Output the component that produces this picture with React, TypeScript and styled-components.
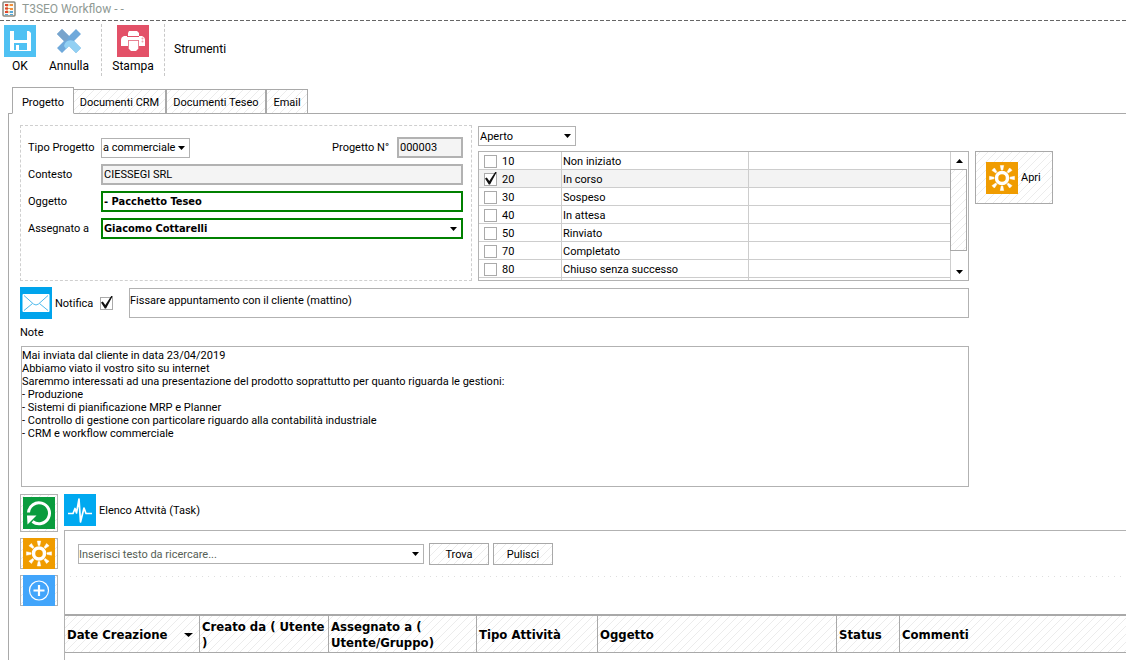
import React from "react";
import styled, { createGlobalStyle, css } from "styled-components";

const ui = `Roboto, "Liberation Sans", sans-serif`;
const uiBold = `"DejaVu Sans Condensed", "DejaVu Sans", sans-serif`;
const line = "#b2b2b2";
const frame = "#a9a9a9";

const GlobalStyle = createGlobalStyle`
  *, *::before, *::after { box-sizing: border-box; }
  body { margin: 0; background: #fff; color: #000; font: 11px/13px ${ui}; }
  button, input, select, textarea { font: inherit; color: inherit; margin: 0; border-radius: 0; outline: none; }
  svg { display: block; flex: none; }
`;

const hatch = css`
  background: #fff linear-gradient(135deg,
    #e6e6e6 0 6%, #fff 6% 19%, #ececec 19% 25%, #fff 25% 50%,
    #e6e6e6 50% 56%, #fff 56% 69%, #ececec 69% 75%, #fff 75%) 0 0 / 8px 8px;
`;

const Page = styled.div`
  display: flex;
  flex-direction: column;
  min-height: 100vh;
`;

const TitleBar = styled.header`
  display: flex;
  align-items: center;
  gap: 6px;
  height: 21px;
  padding: 0 2px 3px;
  background: repeating-linear-gradient(90deg, #666 0 4px, #fff 4px 6px) 0 100% / 100% 1px no-repeat;
  color: #8f9a94;
  font-size: 12px;
`;

const Toolbar = styled.nav`
  display: flex;
  align-items: flex-start;
  height: 66px;
  padding-top: 3px;
  font-size: 12px;
`;

const ToolGroup = styled.div`
  display: flex;
  padding-right: 3px;
`;

const Tool = styled.button<{ $width: number }>`
  display: flex;
  flex-direction: column;
  align-items: center;
  gap: 1px;
  width: ${(p) => p.$width}px;
  padding: 1px 0 0;
  border: 0;
  background: none;
  line-height: 16px;
`;

const ToolDivider = styled.div`
  width: 1px;
  height: 52px;
  border-left: 1px dashed #c8c8c8;
`;

const ToolMenu = styled.button`
  height: 51px;
  padding: 0 9px;
  border: 0;
  background: none;
`;

const TabStrip = styled.div`
  display: flex;
  align-items: flex-end;
  height: 27px;
  margin-left: 8px;
  padding-left: 4px;
  border-bottom: 1px solid ${frame};
`;

const Tab = styled.button<{ $width: number; $active?: boolean; $joined?: boolean }>`
  flex: none;
  width: ${(p) => p.$width}px;
  height: ${(p) => (p.$active ? 27 : 25)}px;
  margin-bottom: -1px;
  padding: ${(p) => (p.$active ? 3 : 1)}px 0 0;
  border: 1px solid ${frame};
  ${(p) => p.$joined && "border-left: 0;"}
  ${hatch}
  ${(p) => p.$active && "background: #fff; border-bottom-color: #fff;"}
`;

const Panel = styled.main`
  flex: 1;
  display: flex;
  flex-direction: column;
  margin-left: 8px;
  padding: 11px 0 0 11px;
  border-left: 1px solid ${frame};
`;

const Columns = styled.div`
  display: grid;
  grid-template-columns: minmax(0, 452fr) minmax(0, 491fr) 151px;
  column-gap: 6px;
`;

const Form = styled.form`
  display: flex;
  flex-direction: column;
  gap: 6px;
  height: 156px;
  padding: 11px 8px 11px 7px;
  border: 1px dashed #cfcfcf;
`;

const FormRow = styled.div`
  display: flex;
  align-items: center;
  height: 21px;
`;

const FieldLabel = styled.label`
  flex: none;
  width: 73px;
`;

const NumberLabel = styled.label`
  margin-left: auto;
  padding-right: 8px;
`;

const TextField = styled.input<{ $required?: boolean; $narrow?: boolean }>`
  flex: ${(p) => (p.$narrow ? "0 0 66px" : "1")};
  min-width: 0;
  height: 21px;
  padding: 0 1px;
  border: 2px solid ${line};
  background: #f4f4f4;
  ${(p) =>
    p.$required &&
    css`
      border-color: #008000;
      background: #fff;
      font-family: ${uiBold};
      font-weight: 700;
    `}
`;

const SelectFrame = styled.span<{ $width?: number; $required?: boolean }>`
  display: grid;
  grid-template-columns: minmax(0, 1fr) 14px;
  align-items: center;
  flex: ${(p) => (p.$width ? "none" : "1")};
  width: ${(p) => (p.$width ? `${p.$width}px` : "auto")};
  height: ${(p) => (p.$required ? 21 : 20)}px;
  border: ${(p) => (p.$required ? "2px solid #008000" : `1px solid ${line}`)};
  background: #fff;

  & > select {
    grid-area: 1 / 1 / 2 / 3;
    height: 100%;
    padding: 0 12px 0 1px;
    appearance: none;
    border: 0;
    background: none;
    ${(p) => p.$required && `font-family: ${uiBold}; font-weight: 700;`}
  }

  & > svg {
    grid-area: 1 / 2 / 2 / 3;
    justify-self: end;
    margin-right: 4px;
    pointer-events: none;
  }
`;

const StatusColumn = styled.section`
  display: flex;
  flex-direction: column;
  gap: 5px;
  padding-top: 1px;
`;

const StatusBox = styled.div`
  display: flex;
  height: 130px;
  border: 1px solid ${line};
`;

const StatusView = styled.div`
  flex: 1;
  overflow: hidden;
`;

const StatusTable = styled.table`
  width: 100%;
  table-layout: fixed;
  border-collapse: separate;
  border-spacing: 0;
`;

const StatusRow = styled.tr<{ $selected?: boolean }>`
  background: ${(p) => (p.$selected ? "#f3f3f3" : "#fff")};
`;

const StatusCell = styled.td<{ $width?: number }>`
  width: ${(p) => (p.$width ? `${p.$width}px` : "auto")};
  height: 18px;
  padding: 1px 0 0 1px;
  border: solid #cdcdcd;
  border-width: 0 1px 1px 0;
`;

const CheckLabel = styled.label`
  display: flex;
  align-items: center;
  gap: 5px;
  padding-left: 4px;
`;

const CheckBox = styled.input.attrs({ type: "checkbox" })`
  position: relative;
  flex: none;
  width: 13px;
  height: 13px;
  appearance: none;
  border: 1px solid #aaa;
  background: #fff;

  &:checked::after {
    content: "";
    position: absolute;
    inset: -2px -1px 0 0;
    background: #111;
    clip-path: polygon(0 54%, 15% 46%, 36% 74%, 88% 0, 100% 0, 42% 100%, 32% 100%);
  }
`;

const ScrollRail = styled.div`
  display: flex;
  flex-direction: column;
  flex: none;
  width: 17px;
`;

const ScrollStep = styled.button`
  display: grid;
  place-items: center;
  flex: none;
  height: 17px;
  padding: 0;
  border: 0;
  background: none;
`;

const ScrollThumb = styled.div`
  height: 82px;
  margin: 0 1px auto -1px;
  border: 1px solid ${frame};
  ${hatch}
`;

const OpenButton = styled.button`
  display: flex;
  align-items: center;
  gap: 3px;
  width: 78px;
  height: 53px;
  margin-top: 26px;
  padding: 0 10px;
  border: 1px solid ${frame};
  ${hatch}
`;

const Wide = styled.div`
  margin-right: 157px;
`;

const NotifyRow = styled.div`
  display: flex;
  align-items: center;
  height: 32px;
  margin-top: 6px;
`;

const NotifyLabel = styled.label`
  display: flex;
  align-items: center;
  justify-content: space-between;
  flex: none;
  width: 58px;
  margin: 0 16px 0 3px;
`;

const Subject = styled.textarea`
  flex: 1;
  height: 30px;
  padding: 5px 0;
  border: 1px solid ${line};
  resize: none;
  overflow: hidden;
`;

const NoteLabel = styled.label`
  display: block;
  line-height: 27px;
`;

const NoteBox = styled.div`
  display: flex;
  padding-left: 1px;
`;

const Note = styled.textarea`
  flex: 1;
  height: 141px;
  padding: 2px 0;
  border: 1px solid ${line};
  resize: none;
  overflow: hidden;
`;

const TaskArea = styled.section`
  flex: 1;
  display: grid;
  grid-template-columns: 38px minmax(0, 1fr);
  column-gap: 6px;
  margin-top: 7px;
`;

const SideButtons = styled.div`
  display: flex;
  flex-direction: column;
  gap: 6px;
`;

const SideButton = styled.button<{ $tall?: boolean }>`
  display: grid;
  place-items: center;
  height: ${(p) => (p.$tall ? 38 : 31)}px;
  padding: 0;
  border: 1px solid ${line};
  ${hatch}

  & > svg {
    height: ${(p) => (p.$tall ? 32 : 31)}px;
    margin: -1px 0;
  }
`;

const TaskColumn = styled.div`
  display: flex;
  flex-direction: column;
`;

const TaskHeading = styled.h2`
  display: flex;
  align-items: center;
  gap: 3px;
  margin: 0 0 4px;
  font: inherit;
`;

const TaskPanel = styled.div`
  flex: 1;
  border: solid ${line};
  border-width: 1px 0 0 1px;
`;

const SearchBar = styled.form`
  display: flex;
  align-items: center;
  gap: 5px;
  height: 46px;
  padding: 0 13px;
  background: repeating-linear-gradient(90deg, #fff 0 5px, #dedede 5px 6px) 0 100% / 100% 1px no-repeat;
`;

const SearchFrame = styled.span`
  display: flex;
  align-items: center;
  flex: 0 1 346px;
  height: 20px;
  padding-right: 4px;
  border: 1px solid ${line};

  & > input {
    flex: 1;
    min-width: 0;
    padding: 0;
    border: 0;
    background: none;
  }

  & > input::placeholder {
    color: #556055;
    opacity: 1;
  }
`;

const PushButtons = styled.div`
  display: flex;
  gap: 4px;
`;

const PushButton = styled.button`
  width: 60px;
  height: 22px;
  padding: 0;
  border: 1px solid ${frame};
  ${hatch}
`;

const TaskTable = styled.table`
  width: 100%;
  margin-top: 37px;
  table-layout: fixed;
  border-collapse: separate;
  border-spacing: 0;
  border-top: 2px solid ${frame};
  font: 700 13px/16px ${uiBold};
`;

const TaskHead = styled.th<{ $width?: number }>`
  width: ${(p) => (p.$width ? `${p.$width}px` : "auto")};
  height: 37px;
  padding: 2px 2px 0;
  border: solid ${frame};
  border-width: 0 1px 1px 0;
  text-align: left;
  ${hatch}

  &:last-child { border-right: 0; }
`;

const SortHead = styled.span`
  display: flex;
  align-items: center;
  justify-content: space-between;
  padding-right: 4px;
`;

const Caret = ({ size = 7, up = false }: { size?: number; up?: boolean }) => (
  <svg width={size} height="4" viewBox="0 0 8 4" preserveAspectRatio="none" aria-hidden="true">
    <path d={up ? "M0 4 4 0l4 4z" : "M0 0h8L4 4z"} fill="#000" />
  </svg>
);

const AppIcon = () => (
  <svg width="14" height="16" viewBox="0 0 14 16" aria-hidden="true">
    <rect x="1" y="1" width="12" height="14" rx="1" fill="#fbf9f5" stroke="#8a8a80" strokeWidth="1.5" />
    <path d="M5 4h3M5 7.500h3M5 11h3M5 4v7" stroke="#d9a45a" fill="none" />
    <path d="M3 3h3v2H3zM3 6.500h3v2H3z" fill="#e0452c" />
    <path d="M8 3h3v2H8zM8 7h3v2H8z" fill="#f0913c" />
    <path d="M3 10h3v2H3z" fill="#e0452c" />
    <path d="M8 10h3v2H8zM3 13h3v1H3zM8 13h3v1H8z" fill="#57a9d8" />
  </svg>
);

const SaveIcon = () => (
  <svg width="32" height="32" viewBox="0 0 32 32" aria-hidden="true">
    <path d="M0 0h32v32H0z" fill="#4fc1f3" />
    <path d="M6 6h4v9h13V6h2l2 2v18h-4v-8H10v8H6z" fill="#fff" />
    <path d="M12 20h3v5h-3z" fill="#fff" />
    <path d="M10 25h13v1H10z" fill="#fff" />
  </svg>
);

const CancelIcon = () => (
  <svg width="32" height="32" viewBox="0 0 32 32" aria-hidden="true">
    <path d="m4 9 5-5 7 7 7-7 5 5-7 7 7 7-5 5-7-7-7 7-5-5 7-7z" fill="#6fa9db" />
    <path d="m4 9 5-5 7 7-3 5-2 0z" fill="#78a4cc" />
    <path d="M11 21c1-5 5-7 10-5l7 7-5 5-7-7-3 3z" fill="#92d0f3" />
  </svg>
);

const PrintIcon = () => (
  <svg width="32" height="32" viewBox="0 0 32 32" aria-hidden="true">
    <path d="M0 0h32v32H0z" fill="#e35168" />
    <path d="M12 6h8l2 2v3H11V8z" fill="#fff" />
    <path d="M7 11h18q3 1 3 4v6h-6v-6H11v6H4v-6q0-3 3-4z" fill="#fff" />
    <path d="M10 11.500h12" stroke="#e35168" />
    <path d="M12 16h9v8l-2 2h-5l-2-2z" fill="#fff" />
    <path d="M11.500 24v-8.500h10V24" stroke="#e88494" fill="none" />
    <circle cx="25.500" cy="13.500" r="1" fill="#f0a0ad" />
    <circle cx="25.500" cy="16.500" r="1" fill="#f0a0ad" />
  </svg>
);

const SunIcon = () => (
  <svg width="32" height="32" viewBox="0 0 32 32" preserveAspectRatio="xMidYMid slice" aria-hidden="true">
    <path d="M0 0h32v32H0z" fill="#f09c00" />
    <circle cx="16" cy="16" r="5.500" fill="none" stroke="#fff" strokeWidth="3.500" />
    {[0, 45, 90, 135, 180, 225, 270, 315].map((angle) => (
      <path key={angle} d="M14.300 3.500h3.400L16.800 8h-1.600z" fill="#fff" stroke="#fff" strokeWidth="0.500" transform={`rotate(${angle} 16 16)`} />
    ))}
  </svg>
);

const MailIcon = () => (
  <svg width="32" height="32" viewBox="0 0 32 32" aria-hidden="true">
    <path d="M0 0h32v32H0z" fill="#00a4ec" />
    <rect x="2.500" y="7" width="27" height="18" rx="1" fill="#fff" />
    <path d="m4 8.500 9.500 8.500q2.500 2 5 0L28 8.500M4 23.500l8.500-7M28 23.500l-8.500-7" fill="none" stroke="#4db9ec" />
  </svg>
);

const RefreshIcon = () => (
  <svg width="32" height="32" viewBox="0 0 32 32" aria-hidden="true">
    <path d="M0 0h32v32H0z" fill="#0a9c3e" />
    <path d="M5.500 15.500a10.500 10.500 0 1 1 4 9" fill="none" stroke="#fff" strokeWidth="3" />
    <path d="M4 18.500h9.500L4.500 27.500z" fill="#fff" />
  </svg>
);

const AddIcon = () => (
  <svg width="32" height="32" viewBox="0 0 32 32" preserveAspectRatio="xMidYMid slice" aria-hidden="true">
    <path d="M0 0h32v32H0z" fill="#42a5fb" />
    <circle cx="16" cy="16" r="9.500" fill="none" stroke="#fff" strokeWidth="1.200" />
    <path d="M16 10.500v11M10.500 16h11" stroke="#fff" strokeWidth="2.200" />
  </svg>
);

const PulseIcon = () => (
  <svg width="32" height="32" viewBox="0 0 32 32" aria-hidden="true">
    <path d="M0 0h32v32H0z" fill="#00a9f0" />
    <path d="M4 19.500h5l2-5 1.500 4.500L15 5l1.500 23L20 14l2 5.500h6" fill="none" stroke="#fff" strokeWidth="1.700" strokeLinejoin="round" />
  </svg>
);

const statuses: [string, string][] = [
  ["10", "Non iniziato"],
  ["20", "In corso"],
  ["30", "Sospeso"],
  ["40", "In attesa"],
  ["50", "Rinviato"],
  ["70", "Completato"],
  ["80", "Chiuso senza successo"],
];

const taskColumns: [string, number?][] = [
  ["Creato da ( Utente )", 129],
  ["Assegnato a ( Utente/Gruppo)", 148],
  ["Tipo Attività", 121],
  ["Oggetto", 239],
  ["Status", 63],
  ["Commenti"],
];

const noteText = `Mai inviata dal cliente in data 23/04/2019
Abbiamo viato il vostro sito su internet
Saremmo interessati ad una presentazione del prodotto soprattutto per quanto riguarda le gestioni:
- Produzione
- Sistemi di pianificazione MRP e Planner
- Controllo di gestione con particolare riguardo alla contabilità industriale
- CRM e workflow commerciale`;

export default function App() {
  return (
    <Page>
      <GlobalStyle />
      <TitleBar>
        <AppIcon />
        T3SEO Workflow - -
      </TitleBar>
      <Toolbar>
        <ToolGroup>
          <Tool $width={40}>
            <SaveIcon />
            OK
          </Tool>
          <Tool $width={58}>
            <CancelIcon />
            Annulla
          </Tool>
        </ToolGroup>
        <ToolDivider />
        <Tool $width={62}>
          <PrintIcon />
          Stampa
        </Tool>
        <ToolDivider />
        <ToolMenu>Strumenti</ToolMenu>
      </Toolbar>

      <TabStrip role="tablist">
        <Tab role="tab" aria-selected="true" $width={62} $active>Progetto</Tab>
        <Tab role="tab" aria-selected="false" $width={92} $joined>Documenti CRM</Tab>
        <Tab role="tab" aria-selected="false" $width={100}>Documenti Teseo</Tab>
        <Tab role="tab" aria-selected="false" $width={42}>Email</Tab>
      </TabStrip>

      <Panel>
        <Columns>
          <Form>
            <FormRow>
              <FieldLabel htmlFor="tipo">Tipo Progetto</FieldLabel>
              <SelectFrame $width={89}>
                <select id="tipo"><option>a commerciale</option></select>
                <Caret />
              </SelectFrame>
              <NumberLabel htmlFor="numero">Progetto N°</NumberLabel>
              <TextField id="numero" $narrow readOnly defaultValue="000003" />
            </FormRow>
            <FormRow>
              <FieldLabel htmlFor="contesto">Contesto</FieldLabel>
              <TextField id="contesto" readOnly defaultValue="CIESSEGI SRL" />
            </FormRow>
            <FormRow>
              <FieldLabel htmlFor="oggetto">Oggetto</FieldLabel>
              <TextField id="oggetto" $required defaultValue="- Pacchetto Teseo" />
            </FormRow>
            <FormRow>
              <FieldLabel htmlFor="assegnato">Assegnato a</FieldLabel>
              <SelectFrame $required>
                <select id="assegnato"><option>Giacomo Cottarelli</option></select>
                <Caret />
              </SelectFrame>
            </FormRow>
          </Form>

          <StatusColumn>
            <SelectFrame $width={98}>
              <select aria-label="Stato"><option>Aperto</option></select>
              <Caret />
            </SelectFrame>
            <StatusBox>
              <StatusView>
                <StatusTable>
                  <tbody>
                    {statuses.map(([code, name]) => (
                      <StatusRow key={code} $selected={code === "20"}>
                        <StatusCell $width={83}>
                          <CheckLabel>
                            <CheckBox defaultChecked={code === "20"} />
                            {code}
                          </CheckLabel>
                        </StatusCell>
                        <StatusCell $width={187}>{name}</StatusCell>
                        <StatusCell />
                      </StatusRow>
                    ))}
                    <StatusRow>
                      <StatusCell />
                      <StatusCell />
                      <StatusCell />
                    </StatusRow>
                  </tbody>
                </StatusTable>
              </StatusView>
              <ScrollRail>
                <ScrollStep type="button" aria-label="Su"><Caret up /></ScrollStep>
                <ScrollThumb />
                <ScrollStep type="button" aria-label="Giù"><Caret /></ScrollStep>
              </ScrollRail>
            </StatusBox>
          </StatusColumn>

          <OpenButton>
            <SunIcon />
            Apri
          </OpenButton>
        </Columns>

        <Wide>
          <NotifyRow>
            <MailIcon />
            <NotifyLabel>
              Notifica
              <CheckBox defaultChecked />
            </NotifyLabel>
            <Subject rows={1} aria-label="Descrizione" defaultValue="Fissare appuntamento con il cliente (mattino)" />
          </NotifyRow>
          <NoteLabel htmlFor="note">Note</NoteLabel>
          <NoteBox>
            <Note id="note" defaultValue={noteText} />
          </NoteBox>
        </Wide>

        <TaskArea>
          <SideButtons>
            <SideButton $tall aria-label="Aggiorna"><RefreshIcon /></SideButton>
            <SideButton aria-label="Apri attività"><SunIcon /></SideButton>
            <SideButton aria-label="Nuova attività"><AddIcon /></SideButton>
          </SideButtons>
          <TaskColumn>
            <TaskHeading>
              <PulseIcon />
              Elenco Attvità (Task)
            </TaskHeading>
            <TaskPanel>
              <SearchBar>
                <SearchFrame>
                  <input type="text" aria-label="Ricerca" placeholder="Inserisci testo da ricercare..." />
                  <Caret />
                </SearchFrame>
                <PushButtons>
                  <PushButton type="button">Trova</PushButton>
                  <PushButton type="button">Pulisci</PushButton>
                </PushButtons>
              </SearchBar>
              <TaskTable>
                <thead>
                  <tr>
                    <TaskHead $width={135}>
                      <SortHead>
                        Date Creazione
                        <Caret size={9} />
                      </SortHead>
                    </TaskHead>
                    {taskColumns.map(([name, width]) => (
                      <TaskHead key={name} $width={width}>{name}</TaskHead>
                    ))}
                  </tr>
                </thead>
              </TaskTable>
            </TaskPanel>
          </TaskColumn>
        </TaskArea>
      </Panel>
    </Page>
  );
}
